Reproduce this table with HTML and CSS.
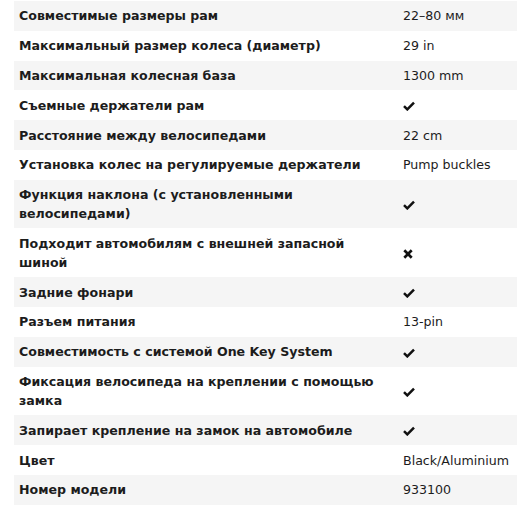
FILE: index.html
```html
<!DOCTYPE html>
<html lang="ru">
<head>
<meta charset="utf-8">
<link rel="stylesheet" href="styles.css">
</head>
<body>
<table class="specs">
  <tbody>
    <tr><th>Совместимые размеры рам</th><td>22–80 мм</td></tr>
    <tr><th>Максимальный размер колеса (диаметр)</th><td>29 in</td></tr>
    <tr><th>Максимальная колесная база</th><td>1300 mm</td></tr>
    <tr><th>Съемные держатели рам</th><td><svg class="icon check" viewBox="0 0 12 10"><path d="M1 5.2 L4.3 8.4 L11 1.6" /></svg></td></tr>
    <tr><th>Расстояние между велосипедами</th><td>22 cm</td></tr>
    <tr><th>Установка колес на регулируемые держатели</th><td>Pump buckles</td></tr>
    <tr><th>Функция наклона (с установленными велосипедами)</th><td><svg class="icon check" viewBox="0 0 12 10"><path d="M1 5.2 L4.3 8.4 L11 1.6" /></svg></td></tr>
    <tr><th>Подходит автомобилям с внешней запасной шиной</th><td><svg class="icon cross" viewBox="0 0 10 10"><path d="M1.3 1.3 L8.7 8.7 M8.7 1.3 L1.3 8.7" /></svg></td></tr>
    <tr><th>Задние фонари</th><td><svg class="icon check" viewBox="0 0 12 10"><path d="M1 5.2 L4.3 8.4 L11 1.6" /></svg></td></tr>
    <tr><th>Разъем питания</th><td>13-pin</td></tr>
    <tr><th>Совместимость с системой One Key System</th><td><svg class="icon check" viewBox="0 0 12 10"><path d="M1 5.2 L4.3 8.4 L11 1.6" /></svg></td></tr>
    <tr><th>Фиксация велосипеда на креплении с помощью замка</th><td><svg class="icon check" viewBox="0 0 12 10"><path d="M1 5.2 L4.3 8.4 L11 1.6" /></svg></td></tr>
    <tr><th>Запирает крепление на замок на автомобиле</th><td><svg class="icon check" viewBox="0 0 12 10"><path d="M1 5.2 L4.3 8.4 L11 1.6" /></svg></td></tr>
    <tr><th>Цвет</th><td>Black/Aluminium</td></tr>
    <tr><th>Номер модели</th><td>933100</td></tr>
  </tbody>
</table>
</body>
</html>
```

FILE: styles.css
```css
html, body {
  margin: 0;
  padding: 0;
  background: #ffffff;
}
body {
  padding: 1px 11px 0 14px;
  font-family: "DejaVu Sans", Verdana, sans-serif;
  font-size: 12.6px;
  color: #1c1c1c;
}
.specs {
  width: 503px;
  border-collapse: collapse;
  border-spacing: 0;
}
.specs tr:nth-child(odd) {
  background: #f5f5f5;
}
.specs th,
.specs td {
  padding: 5.4px 5px;
  line-height: 19px;
  vertical-align: middle;
  text-align: left;
}
.specs th {
  width: 374px;
  font-weight: bold;
}
.specs td {
  font-weight: normal;
}
.icon {
  display: inline-block;
  vertical-align: middle;
  fill: none;
  stroke: #111;
  stroke-width: 2.5;
}
.check {
  width: 12px;
  height: 10px;
}
.cross {
  width: 10px;
  height: 10px;
  stroke-width: 2.7;
}
```
